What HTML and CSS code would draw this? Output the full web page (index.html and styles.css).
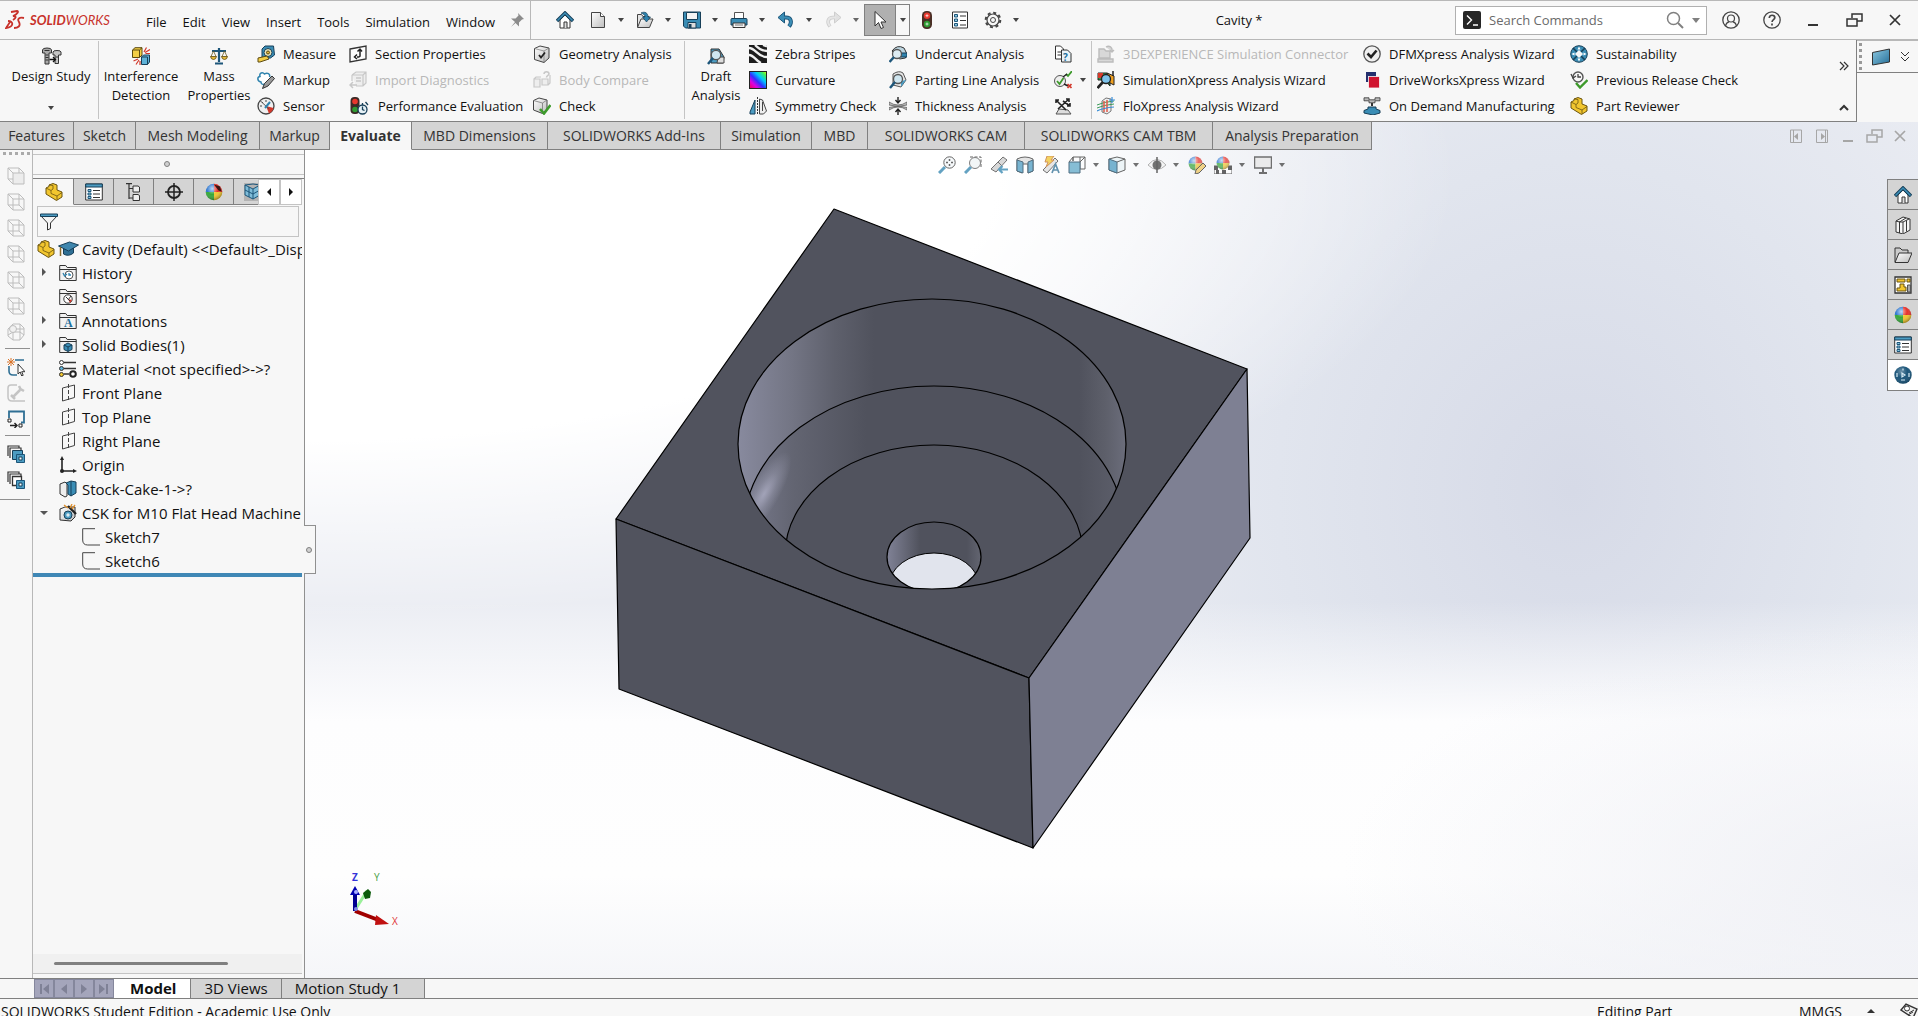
FILE: index.html
```html
<!DOCTYPE html>
<html lang="en">
<head>
  <meta charset="UTF-8">
  <title>SOLIDWORKS - Cavity</title>
  <meta name="viewport" content="width=device-width, initial-scale=1.0">
  <link rel="stylesheet" href="styles.css">
</head>
<body>

  <!-- ICON SPRITE -->
  <svg class="sprite" aria-hidden="true">
    <defs>
      <linearGradient id="blueFill" x1="0" y1="0" x2="1" y2="1"><stop offset="0" stop-color="#8cc8e0"/><stop offset="1" stop-color="#256f99"/></linearGradient>
      <linearGradient id="greyFill" x1="0" y1="0" x2="1" y2="1"><stop offset="0" stop-color="#ffffff"/><stop offset="1" stop-color="#bdbdbd"/></linearGradient>
      <linearGradient id="rainbow" x1="0" y1="1" x2="1" y2="0"><stop offset="0" stop-color="#f00050"/><stop offset=".25" stop-color="#e000e0"/><stop offset=".45" stop-color="#3030ff"/><stop offset=".65" stop-color="#00c8ff"/><stop offset=".85" stop-color="#40f060"/><stop offset="1" stop-color="#e0ff00"/></linearGradient>
      <radialGradient id="shine" cx=".4" cy=".3" r=".7"><stop offset="0" stop-color="#fff" stop-opacity=".7"/><stop offset=".5" stop-color="#fff" stop-opacity="0"/><stop offset="1" stop-color="#000" stop-opacity=".35"/></radialGradient>
    </defs>

    <symbol id="home" viewBox="0 0 18 18"><path d="M4 9v8h10V9L9 4z" fill="#fff" stroke="#333"/><path d="M8 17v-6h3v6" fill="#ddd" stroke="#333"/><path d="M1 10l8-8 8 8" fill="none" stroke="#173f58" stroke-width="3.4"/><path d="M1.500 9.500L9 2l7.500 7.500" fill="none" stroke="#3c8fb8" stroke-width="1.500"/></symbol>
    <symbol id="new" viewBox="0 0 18 18"><path d="M2.500 1.500h9l4 4v11h-13z" fill="url(#greyFill)" stroke="#444"/><path d="M11.500 1.500v4h4" fill="#fff" stroke="#444"/></symbol>
    <symbol id="open" viewBox="0 0 18 18"><path d="M1.500 16V3.500h4l1.500 2h6V8" fill="#e4e4e4" stroke="#444"/><path d="M1.500 16.500L5 8h12l-3.500 8.500z" fill="url(#greyFill)" stroke="#444"/><path d="M5 2c4-2 7 0 7 4h2.500L10.500 11 6.500 6H9c0-2-1-3-4-4z" fill="#2f83ae" stroke="#173f58" stroke-width=".7"/></symbol>
    <symbol id="save" viewBox="0 0 18 18"><path d="M.5 1h17v16H2.500L.5 15z" fill="#3a8db5" stroke="#173f58"/><path d="M3.500 1.500h11v7h-11z" fill="#f4f4f4" stroke="#173f58"/><path d="M5 11.500h8V17H5z" fill="#ddd" stroke="#173f58"/><path d="M6 13h2.500v4H6z" fill="#173f58"/></symbol>
    <symbol id="print" viewBox="0 0 18 18"><path d="M4.500 8V1.500h9V8" fill="#fff" stroke="#555"/><path d="M1 8.500q0-1 1-1h14q1 0 1 1V14H1z" fill="#3a8db5" stroke="#173f58"/><path d="M3 12h12v4.500H3z" fill="#f4f4f4" stroke="#333"/><path d="M5 14h8" stroke="#777"/></symbol>
    <symbol id="undo" viewBox="0 0 18 18"><path d="M6 6.500h3c5 0 6.500 4.500 3 9" fill="none" stroke="#1d567a" stroke-width="4"/><path d="M1 6.500L7.500 1v11z" fill="#3a8db5" stroke="#1d567a"/><path d="M6 6.500h3c5 0 6.500 4.500 3 8.500" fill="none" stroke="#3a8db5" stroke-width="2.200"/></symbol>
    <symbol id="redo" viewBox="0 0 18 18"><path d="M12 6.500H9c-5 0-6.500 4.500-3 9" fill="none" stroke="#c4c4c4" stroke-width="3.600"/><path d="M17 6.500L10.500 1v11z" fill="#dcdcdc" stroke="#c4c4c4"/><path d="M12 6.500H9c-5 0-6.500 4.500-3 8.500" fill="none" stroke="#e2e2e2" stroke-width="2"/></symbol>
    <symbol id="cursor" viewBox="0 0 18 18"><path d="M4 .5v14.500l3.500-3.500L10 17.500l2.500-1-2.500-5.500h5z" fill="#fff" stroke="#333"/></symbol>
    <symbol id="traffic" viewBox="0 0 18 18"><rect x="4" y="0" width="10" height="18" rx="4.500" fill="#4a2e26"/><circle cx="9" cy="4.700" r="3.200" fill="#e8372c"/><circle cx="9" cy="13" r="3.200" fill="#2e9a31"/><path d="M7.500 4.700h3M9 3.200v3M7.500 13h3M9 11.500v3" stroke="#fff" stroke-opacity=".7"/></symbol>
    <symbol id="list" viewBox="0 0 18 18"><path d="M1.500 1h15v16h-15z" fill="#fff" stroke="#333"/><path d="M3.500 3.500h3v2.500h-3zM3.500 8h3v2.500h-3zM3.500 12.500h3V15h-3z" fill="#8cc8e0" stroke="#1d567a"/><path d="M9 5h6M9 9.500h6M9 14h6" stroke="#333"/></symbol>
    <symbol id="gear" viewBox="0 0 18 18"><circle cx="9" cy="9" r="7.300" fill="none" stroke="#444" stroke-width="2" stroke-dasharray="3 2.730"/><circle cx="9" cy="9" r="6" fill="#f7f7f7" stroke="#444" stroke-width="1.200"/><circle cx="9" cy="9" r="2.500" fill="none" stroke="#444"/></symbol>
    <symbol id="pin" viewBox="0 0 18 18"><path d="M10 2l6 6-2 .5-3 3v4L7.500 12 3 16l4-5-4-3.500h4.500l3-3z" fill="#8c8c8c"/></symbol>
    <symbol id="prompt" viewBox="0 0 18 18"><rect width="18" height="18" rx="2" fill="#262626"/><path d="M4 4.500L8.500 9 4 13.500M10 14h5" fill="none" stroke="#fff" stroke-width="1.400"/></symbol>
    <symbol id="magnify" viewBox="0 0 18 18"><circle cx="7.500" cy="7.500" r="6" fill="none" stroke="#808080" stroke-width="1.500"/><path d="M12 12l5 5" stroke="#808080" stroke-width="2"/></symbol>
    <symbol id="user" viewBox="0 0 18 18"><circle cx="9" cy="9" r="8.200" fill="none" stroke="#444" stroke-width="1.300"/><circle cx="9" cy="7.500" r="3.500" fill="none" stroke="#444" stroke-width="1.200"/><path d="M3.500 15c.5-3 2.500-4 3.500-4.200M14.500 15c-.5-3-2.500-4-3.500-4.200" fill="none" stroke="#444" stroke-width="1.200"/></symbol>
    <symbol id="help" viewBox="0 0 18 18"><circle cx="9" cy="9" r="8.200" fill="none" stroke="#444" stroke-width="1.300"/><path d="M6.300 7c0-3.800 5.500-3.500 5.500-.3 0 2-2.700 2-2.700 4.300M9 12.500v2" fill="none" stroke="#444" stroke-width="1.700"/></symbol>
    <symbol id="minimize" viewBox="0 0 18 18"><path d="M4 14h10" stroke="currentColor" stroke-width="2"/></symbol>
    <symbol id="restore" viewBox="0 0 18 18"><path d="M7 7V3h10v7h-5M2 8h10v7H2z" fill="none" stroke="currentColor" stroke-width="1.500"/></symbol>
    <symbol id="close" viewBox="0 0 18 18"><path d="M4 4l10 10M14 4L4 14" stroke="currentColor" stroke-width="1.700"/></symbol>
    <symbol id="dock-left" viewBox="0 0 18 18"><path d="M3.500 3h11v12.500h-11zM6.500 3v12.500" fill="none" stroke="currentColor"/><path d="M11 6v7L7 9.500z" fill="currentColor"/></symbol>
    <symbol id="dock-right" viewBox="0 0 18 18"><path d="M3.500 3h11v12.500h-11zM12.500 3v12.500" fill="none" stroke="currentColor"/><path d="M8 6v7l4-3.500z" fill="currentColor"/></symbol>

    <symbol id="bolts" viewBox="0 0 20 18"><path d="M1 3q0-2 4.500-2T10 3v3H7.500v11h-4V6H1z" fill="#a9a9a9" stroke="#333"/><path d="M11.500 5q0-1.500 4-1.500t4 1.500v3H17v8.500h-3.500V8h-2z" fill="#c4c4c4" stroke="#333"/><path d="M3 3.500h5M4 8h3M4 10.500h3M4 13h3M14 10h3" stroke="#333"/><path d="M8 12.500h6M11.500 10l2.500 2.500-2.500 2.500" fill="none" stroke="#111" stroke-width="1.300"/></symbol>
    <symbol id="interference" viewBox="0 0 18 18"><path d="M.5 3L3 .7h7V8L7.500 10.500h-7z" fill="#f3ce45" stroke="#5c4a10"/><path d="M.5 3h7v7.500M7.500 3L10 .7" fill="none" stroke="#5c4a10"/><path d="M9.500 10L11.500 8h6v7l-2 2.500h-6z" fill="#5fb2d8" stroke="#173f58"/><path d="M9.500 10h6v7.500" fill="none" stroke="#173f58"/><path d="M12 5l2.500-4.500M13 5.500l5-3M13.500 6.500H18M6 12l-4.500 2M7 13l-3 4.500M8 14v4" stroke="#d2382b" stroke-width="1.200"/></symbol>
    <symbol id="scales" viewBox="0 0 18 18"><path d="M9 1v14M2 4h14M5 16.500h8" stroke="#1d567a" stroke-width="2.200"/><path d="M3.500 4L1 9.500M3.500 4L6 9.500M14.500 4L12 9.500M14.500 4L17 9.500" stroke="#6b5b20" stroke-width=".8"/><path d="M.5 9.500h6q-.5 3-3 3t-3-3zM11.500 9.500h6q-.5 3-3 3t-3-3z" fill="#e3b83a" stroke="#5c4a10" stroke-width=".8"/></symbol>
    <symbol id="measure" viewBox="0 0 18 18"><path d="M5 4l3-3h8.500l1 9-4 3H5z" fill="#3a8db5" stroke="#173f58"/><circle cx="11" cy="7.500" r="4" fill="#e8e2b8" stroke="#173f58"/><circle cx="11" cy="7.500" r="1.500" fill="#e3b83a" stroke="#5c4a10"/><path d="M1 13l9-2 2 3-9 3H1z" fill="#f3ce45" stroke="#5c4a10"/></symbol>
    <symbol id="markup" viewBox="0 0 18 18"><path d="M9 12c-2 2-5 2-5-1-4-1-4-5-1-5.500C2 2 5.500.5 7.500 3c3-2 6 0 5 3" fill="#fff" stroke="#2f83ae" stroke-width="1.500"/><path d="M5.500 17.500l2-5L15 5l2.500 2.500L11 15z" fill="#9a9a9a" stroke="#333"/></symbol>
    <symbol id="sensor" viewBox="0 0 18 18"><circle cx="9" cy="9" r="8" fill="#f0f0f0" stroke="#444" stroke-width="1.300"/><path d="M9 9l7.500 2A8 8 0 0 1 12 16.500z" fill="#d2382b"/><path d="M3 9h2M5 5l1 1M9 3v2M13 5l-1 1" stroke="#444"/><path d="M3 3.500L12 12" stroke="#555"/><path d="M8 11l5-6" stroke="#2f83ae" stroke-width="2"/></symbol>
    <symbol id="section" viewBox="0 0 18 18"><path d="M1 4l16-3v13L1 17z" fill="#fdfdfd" stroke="#333" stroke-width="1.300"/><path d="M11 5v6q0 1-3 1M8.500 6.500L11 4l2 2.500M8 9.500L5.500 12 8 14" fill="none" stroke="#222" stroke-width="1.500"/></symbol>
    <symbol id="diagnostics" viewBox="0 0 18 18"><path d="M3 4l4-3h10v11l-3 3H7M3 4h11v11M14 4l3-3M3 4v6" fill="#eee" stroke="#c8c8c8" stroke-width="1.200"/><path d="M7 7h5M7 10h5M1 14h7M4 11l-3 3 3 3" fill="none" stroke="#c8c8c8" stroke-width="1.500"/></symbol>
    <symbol id="performance" viewBox="0 0 18 18"><rect x="0" y="0" width="9" height="17" rx="4" fill="#3b2a26"/><circle cx="4.500" cy="4.500" r="2.800" fill="#e8372c"/><circle cx="4.500" cy="12.500" r="2.800" fill="#2e9a31"/><circle cx="12" cy="12.500" r="4.500" fill="#e6f1f6" stroke="#173f58" stroke-width="1.300"/><path d="M12 9.500v3l2 1M12 6V8M15 5l2.500 3" fill="none" stroke="#173f58" stroke-width="1.300"/></symbol>
    <symbol id="geometry" viewBox="0 0 18 18"><path d="M1.500 3.500L7 1l9 2v10l-5 4.500-9.500-3z" fill="url(#greyFill)" stroke="#444"/><path d="M1.500 3.500L11 6v11.500M11 6l5-3" fill="none" stroke="#777" stroke-width=".7"/><path d="M6 10l2 2.500 4-5" fill="none" stroke="#222" stroke-width="1.800"/></symbol>
    <symbol id="compare" viewBox="0 0 18 18"><path d="M1 8h6v8H1zM1 8l2-2h5M9 8h6v6H9zM15 14l2-2V4" fill="#eee" stroke="#c8c8c8" stroke-width="1.200"/><path d="M11 3c0-3 5-3 5 0 0 1.500-2.500 1.500-2.500 3.500" fill="none" stroke="#c8c8c8" stroke-width="1.500"/></symbol>
    <symbol id="check" viewBox="0 0 18 18"><path d="M.5 3.500L6 1l8 2v9l-4.500 4.500L.5 13z" fill="url(#greyFill)" stroke="#444"/><path d="M.5 3.500L9.500 6l4.500-3M9.500 6v10" fill="none" stroke="#777" stroke-width=".8"/><path d="M7 12l4 4.500L17.500 8" fill="none" stroke="#3d9a2b" stroke-width="2.600"/></symbol>
    <symbol id="draft" viewBox="0 0 18 18"><path d="M4 2h8l5 8-1 6H4z" fill="#4c9cc2" stroke="#333"/><path d="M11 10h6v6h-7z" fill="#ddd" stroke="#444"/><circle cx="9" cy="8" r="4.700" fill="#cfe6f0" stroke="#555" stroke-width="1.300"/><path d="M6 11l-5 6" stroke="#1d567a" stroke-width="2.500"/></symbol>
    <symbol id="zebra" viewBox="0 0 18 18"><rect width="18" height="18" fill="#1c1c1c"/><path d="M0 3c7 0 8 9 18 9M0 10c5 0 7 6 12 8M6 0c3 3 6 6 12 6M14 0l4 1.500" fill="none" stroke="#f0f0f0" stroke-width="2.300"/></symbol>
    <symbol id="curvature" viewBox="0 0 18 18"><rect x=".5" y=".5" width="17" height="17" fill="url(#rainbow)" stroke="#222"/></symbol>
    <symbol id="symmetry" viewBox="0 0 18 18"><path d="M1 15L6 3v14H1z" fill="#4c9cc2" stroke="#173f58"/><path d="M8.500 0v18" stroke="#333" stroke-dasharray="2 1"/><path d="M10.500 2l3 1 4 11-3 3h-4zM13.500 5v9" fill="#eee" stroke="#444"/></symbol>
    <symbol id="undercut" viewBox="0 0 18 18"><path d="M3 6q5-7 12-3l2.500 5-1 5-6 1z" fill="#bcd4df" stroke="#333"/><path d="M11 8h7v4h-6z" fill="#2f83ae" stroke="#173f58"/><circle cx="8" cy="9" r="4.500" fill="#dcebf2" stroke="#555" stroke-width="1.300"/><path d="M5 12l-4.500 5" stroke="#1d567a" stroke-width="2.500"/></symbol>
    <symbol id="parting" viewBox="0 0 18 18"><path d="M4 3q6-4 10-1l3 7-5 7-8-2z" fill="#e6e6e6" stroke="#555"/><path d="M12 10l5-1-5 7z" fill="#4c9cc2"/><circle cx="9" cy="8" r="4.500" fill="#cfe6f0" stroke="#555" stroke-width="1.300"/><path d="M6 11l-5 6" stroke="#1d567a" stroke-width="2.500"/></symbol>
    <symbol id="thickness" viewBox="0 0 18 18"><path d="M0 5q9 6 18 0v3q-9 3-18 0zM0 13q9-6 18 0v-2.500q-9-3-18 0z" fill="#bbb" stroke="#555" stroke-width=".7"/><path d="M9 0v5M6.500 3L9 6l2.500-3M9 18v-5M6.500 15L9 12l2.500 3" fill="none" stroke="#222" stroke-width="1.400"/></symbol>
    <symbol id="dimxpert" viewBox="0 0 18 18"><circle cx="6" cy="10" r="5.500" fill="#eee" stroke="#555"/><path d="M3 10l2.500 3 4-6M12 3l2 2 4-5" fill="none" stroke="#3d9a2b" stroke-width="1.800"/><path d="M9 6l4-3M10 13l4 2" stroke="#222" stroke-width="1.500"/><path d="M13.500 13l4 4M17.500 13l-4 4" stroke="#d2382b" stroke-width="1.700"/></symbol>
    <symbol id="network" viewBox="0 0 18 18"><path d="M2 17l3-5 9 1 3 4z" fill="#ddd" stroke="#555"/><path d="M2 3l10 10M15 2L4 12M2 6V3h3M12 2h3v3M9 4l7 5M16 6v3h-3" fill="none" stroke="#222" stroke-width="1.600"/></symbol>
    <symbol id="connector" viewBox="0 0 18 18"><path d="M2 4h5l2 2h4v7H2zM1 14h15v3H1zM9 2c3-2 7 0 6 5M13 5l2 2 2-2" fill="#d8d8d8" stroke="#bcbcbc" stroke-width="1.400"/></symbol>
    <symbol id="simxpress" viewBox="0 0 18 18"><path d="M1 2h9l3 3v10L8 9H1z" fill="#2b9b48" stroke="#222"/><path d="M10 2l7 3v9l-4-2z" fill="#f0a020" stroke="#222"/><path d="M1 2h5v5H1z" fill="#d83a2b"/><circle cx="9" cy="8" r="4.500" fill="#7cc2ea" stroke="#222" stroke-width="1.300"/><path d="M6 11l-5.500 6" stroke="#222" stroke-width="2.600"/><path d="M16 0v5" stroke="#222" stroke-width="1.500"/></symbol>
    <symbol id="floxpress" viewBox="0 0 18 18"><path d="M5 4l4-3 5 1v12l-4 3-5-2z" fill="#eee" stroke="#777"/><path d="M0 8q6-3 17-4M0 11q6-3 17-4" fill="none" stroke="#3d9a5b"/><path d="M7 4v11M10 3v12" stroke="#e05a4a" stroke-width="1.500"/><path d="M0 14q6-3 17-4M12 3h6M15 0v6" fill="none" stroke="#3a8dd5" stroke-width="1.200"/></symbol>
    <symbol id="dfm" viewBox="0 0 18 18"><circle cx="9" cy="9" r="8.200" fill="#f0f0f0" stroke="#555" stroke-width="1.300"/><path d="M4.500 8.500L8 12l5.500-6.500" fill="none" stroke="#222" stroke-width="2.600"/></symbol>
    <symbol id="driveworks" viewBox="0 0 18 18"><rect x="3" y="1" width="10" height="10" fill="#24306e"/><rect x="5.500" y="5.500" width="11" height="11.500" fill="#d0142f" stroke="#f7f7f7" stroke-width=".8"/></symbol>
    <symbol id="ondemand" viewBox="0 0 18 18"><path d="M1 .8h5v2h6v-2h5v3h-5v2H6v-2H1z" fill="#bbb" stroke="#333" stroke-width=".8"/><path d="M8 6h2v3H8z" fill="#333"/><path d="M5 10h8v2l4 1.500V16l-7 2-9-2v-2.500L5 12z" fill="#3a8db5" stroke="#173f58"/></symbol>
    <symbol id="sustain" viewBox="0 0 18 18"><circle cx="9" cy="9" r="8.300" fill="#3a8db5" stroke="#173f58"/><path d="M3 3l4 4M15 3l-4 4M3 15l4-4M15 15l-4-4" stroke="#173f58" stroke-width="1.600"/><path d="M9 5l4 4-4 4-4-4z" fill="#f7f7f7"/><path d="M9 1.500l1.500 3h-3zM9 16.500l1.500-3h-3zM1.500 9l3-1.500v3zM16.500 9l-3-1.500v3z" fill="#fff"/></symbol>
    <symbol id="release" viewBox="0 0 18 18"><circle cx="8" cy="6" r="5" fill="#f7f7f7" stroke="#555" stroke-width="1.400"/><path d="M8 3v3h3M1 3l2 4 3-2" fill="none" stroke="#444" stroke-width="1.300"/><path d="M6 12l4 4.500L17.500 9" fill="none" stroke="#3d9a2b" stroke-width="2.400"/></symbol>
    <symbol id="part" viewBox="0 0 18 18"><path d="M1 5l3-1.500V2l4-1.500 4 1.500v5l5 2v5l-5.500 3.500L1 11z" fill="#f2c62e" stroke="#6b5410"/><path d="M1 5l5 2.500v3l6 2.500v4M6 7.500L8 6l0-3.500M12 13l5-3.500M8 2.500L4 2" fill="none" stroke="#6b5410" stroke-width=".8"/></symbol>
    <symbol id="plane-blue" viewBox="0 0 18 18"><path d="M.5 4.500l17-3.500v13L.5 17z" fill="url(#blueFill)" stroke="#333"/></symbol>

    <symbol id="cube" viewBox="0 0 18 18"><path d="M1 1h11v11H1zM6 6h11v11H6zM1 1l5 5M12 1l5 5M1 12l5 5M12 12l5 5" fill="none" stroke="#bdbdbd"/></symbol>
    <symbol id="cube-front" viewBox="0 0 18 18"><path d="M1 1h11v11H1zM1 1l5 5M12 1l5 5M1 12l5 5" fill="none" stroke="#bdbdbd"/><path d="M6 6h11v11H6z" fill="#ececec" stroke="#bdbdbd"/></symbol>
    <symbol id="cube-iso" viewBox="0 0 18 18"><path d="M6 1h7l4 4v7l-4 5H6l-5-4V6zM6 6h11M6 6v11M1 12l5-3h7l4 3M13 1v16" fill="none" stroke="#bdbdbd"/><circle cx="6" cy="6" r="3.500" fill="#f0f0f0" stroke="#bdbdbd"/></symbol>
    <symbol id="sketch-edit" viewBox="0 0 18 18"><path d="M8 2h9M2 8v5q0 4 4 4h4" fill="none" stroke="#2f6f94" stroke-width="1.600"/><path d="M4 0v8M0 4h8M1 1l6 6M7 1L1 7" stroke="#d8742b"/><path d="M11 6v10l2.200-2 1.500 4 1.500-.7-1.500-3.600H18z" fill="#fff" stroke="#333"/></symbol>
    <symbol id="wrench" viewBox="0 0 18 18"><path d="M10 1H4Q1 1 1 4v9q0 4 4 4h13" fill="none" stroke="#c4c4c4" stroke-width="1.500"/><path d="M6 13l7-7M12 2l1.500 3L17 7M4 11l4 4" fill="none" stroke="#c4c4c4" stroke-width="2.500"/></symbol>
    <symbol id="drawing" viewBox="0 0 18 18"><path d="M2 8V1.500h15v11h-3" fill="none" stroke="#2f6f94" stroke-width="1.800"/><path d="M1 9h3v3H1zM12 14h3v3h-3z" fill="#fff" stroke="#222"/><path d="M3 15.500h7M7.500 13l2.500 2.500L7.500 18" fill="none" stroke="#222" stroke-width="1.400"/></symbol>
    <symbol id="stack" viewBox="0 0 18 18"><path d="M1 11V1h11v2M3 13V3h11v2" fill="none" stroke="#333" stroke-width="1.200"/><path d="M5.500 5.500h10v9h-10z" fill="#4c9cc2" stroke="#173f58"/><path d="M9.500 9.500h8v8h-8z" fill="#4c9cc2" stroke="#1d567a"/><path d="M12 12h3v3h-3z" fill="#fff" stroke="#173f58"/></symbol>
    <symbol id="stack-open" viewBox="0 0 18 18"><path d="M1 11V1h11v2M3 13V3h11v2" fill="none" stroke="#333" stroke-width="1.200"/><path d="M5.500 5.500h9v9h-9z" fill="#fff" stroke="#333" stroke-width="1.300"/><path d="M9.500 9.500h8v8h-8z" fill="#4c9cc2" stroke="#1d567a"/><path d="M12 12h3v3h-3z" fill="#fff" stroke="#173f58"/></symbol>

    <symbol id="property" viewBox="0 0 18 18"><path d="M.7 1h16.600v16H.7z" fill="#fff" stroke="#333"/><path d="M.7 1h16.600v3H.7z" fill="#4c9cc2" stroke="#173f58"/><path d="M3 6.500h3v2H3zM3 10h3v2H3zM3 13.500h3v2H3z" fill="#8cc8e0" stroke="#1d567a"/><path d="M8 7.500h7M8 11h7M8 14.500h7" stroke="#333"/></symbol>
    <symbol id="config" viewBox="0 0 18 18"><path d="M4 0v16M1 .7h6M4 5.500h4M4 15h4" fill="none" stroke="#333" stroke-width="1.200"/><path d="M8 3h5l1.500 1v5H8zM8 11.500h5l1.500 1v5H8z" fill="#eee" stroke="#333"/></symbol>
    <symbol id="target" viewBox="0 0 18 18"><circle cx="9" cy="9" r="6" fill="none" stroke="#222" stroke-width="1.800"/><path d="M9 0v18M0 9h18" stroke="#222" stroke-width="1.500"/></symbol>
    <symbol id="ball" viewBox="0 0 18 18"><path d="M9 .7A8.300 8.300 0 0 0 .7 9H9z" fill="#2f78d0"/><path d="M9 .7A8.300 8.300 0 0 1 17.300 9H9z" fill="#e5322b"/><path d="M.7 9A8.300 8.300 0 0 0 9 17.300V9z" fill="#36a83a"/><path d="M9 17.300A8.300 8.300 0 0 0 17.300 9H9z" fill="#f2c62e"/><circle cx="9" cy="9" r="8.300" fill="url(#shine)"/></symbol>
    <symbol id="ball-cut" viewBox="0 0 18 18"><use href="#ball"/><path d="M9 1.500l6 2 1.500 5-3-1z" fill="#3a1512"/></symbol>
    <symbol id="cam" viewBox="0 0 18 18"><path d="M0 0h18v18H0z" fill="#b3b3b3"/><path d="M1 2l8 4v10L1 12zM9 6l7-4v10l-7 4" fill="#7fbcd8" stroke="#1d567a"/><path d="M1 2l8-1 7 1M1 7l8 4 7-4M5 4v10" fill="none" stroke="#1d567a"/></symbol>
    <symbol id="funnel" viewBox="0 0 18 18"><path d="M1 3l6.500 7v7l3-1.500V10L17 3z" fill="#f4f4f4" stroke="#333"/><path d="M.5 1h17v2.500H.5z" fill="#4c9cc2" stroke="#173f58"/></symbol>
    <symbol id="cap" viewBox="0 0 20 18"><path d="M5 9v5q5 3 10-1V8z" fill="#2f6f94" stroke="#173f58"/><path d="M0 6l11-4 9 3-10 6z" fill="#3f86ad" stroke="#173f58"/><path d="M2 7v9" stroke="#8a6a2a" stroke-width="1.500"/></symbol>
    <symbol id="folder" viewBox="0 0 18 18"><path d="M.7 16.500V1.500h6l1.500 2h9v13z" fill="#f2f2f2" stroke="#333"/><path d="M.7 5.500h16.600" stroke="#333"/></symbol>
    <symbol id="history" viewBox="0 0 18 18"><use href="#folder"/><circle cx="10" cy="11" r="4" fill="#fff" stroke="#555"/><path d="M10 9v2h2M4 9l1.500 3L8 10" fill="none" stroke="#2f83ae" stroke-width="1.300"/></symbol>
    <symbol id="sensors" viewBox="0 0 18 18"><use href="#folder"/><circle cx="9" cy="11" r="4.200" fill="#fff" stroke="#333"/><path d="M9 11l4 1-2 3z" fill="#d2382b"/><path d="M7 9l4 4M9 12l3-4" stroke="#333"/></symbol>
    <symbol id="bodies" viewBox="0 0 18 18"><use href="#folder"/><path d="M5 9l4-2 4 2v4.500l-4 2-4-2z" fill="#3a8db5" stroke="#173f58"/><path d="M5 9l4 2 4-2M9 11v4.500" fill="none" stroke="#173f58"/></symbol>
    <symbol id="material" viewBox="0 0 18 18"><path d="M5 2.500h12M5 8.500h12M5 14h5" stroke="#333" stroke-width="1.500"/><circle cx="2.500" cy="2.500" r="2" fill="#fff" stroke="#333"/><circle cx="2.500" cy="8.500" r="2" fill="#5fb2d8" stroke="#333"/><circle cx="2.500" cy="14.500" r="2" fill="#f2c62e" stroke="#333"/><circle cx="14" cy="14" r="2.800" fill="#fff" stroke="#222" stroke-width="2"/></symbol>
    <symbol id="plane" viewBox="0 0 18 18"><path d="M3.500 4L15.500 1v12.500L3.500 17z" fill="none" stroke="#444"/><path d="M9.500 0v18" stroke="#444" stroke-dasharray="4 2"/></symbol>
    <symbol id="origin" viewBox="0 0 18 18"><path d="M3 2v13h13" fill="none" stroke="#222" stroke-width="1.600"/><path d="M1 4l2-4 2 4zM14 13l4 2-4 2z" fill="#222"/><circle cx="3" cy="15" r="2" fill="#222"/></symbol>
    <symbol id="stock" viewBox="0 0 18 18"><path d="M1 4l5-2 2 2v12l-2 1-5-3z" fill="#eee" stroke="#333"/><path d="M7 3l5-2 5 1v11l-5 3-3-2V5z" fill="#3a8db5" stroke="#173f58"/><path d="M12 1v15" stroke="#173f58"/></symbol>
    <symbol id="hole" viewBox="0 0 18 18"><path d="M1 5l5-2h10v10l-4 4-11-1z" fill="url(#greyFill)" stroke="#333"/><circle cx="9" cy="11" r="4" fill="#4c9cc2" stroke="#173f58"/><circle cx="9" cy="11" r="1.700" fill="#dcebf2"/><path d="M9 2l8 8" stroke="#222" stroke-width="2.300"/><path d="M5 1l4 3M13 0l-2 4M16 1l-3 4" stroke="#e0902b" stroke-width="1.300"/></symbol>
    <symbol id="sketch" viewBox="0 0 18 18"><path d="M13 .7H.7V12q0 5 5 5H18" fill="none" stroke="#444"/></symbol>

    <symbol id="zoom-fit" viewBox="0 0 18 18"><circle cx="11.500" cy="6.500" r="5.700" fill="#f4f8fa" stroke="#333"/><path d="M11.500 3v7M8 6.500h7" stroke="#333" stroke-width="1.500" stroke-dasharray="2 3"/><path d="M7 11l-6 6" stroke="#2f83ae" stroke-width="3"/></symbol>
    <symbol id="zoom-area" viewBox="0 0 18 18"><path d="M6 1h11v11" fill="none" stroke="#333" stroke-dasharray="3 1.500"/><circle cx="11" cy="7" r="5.500" fill="#eef3f5" stroke="#555"/><path d="M7 11l-6 6" stroke="#2f83ae" stroke-width="3"/></symbol>
    <symbol id="prev-view" viewBox="0 0 18 18"><path d="M1 13L13 1l4 3L6 16z" fill="#ccc" stroke="#444"/><path d="M8 6l4 4" stroke="#444"/><path d="M9 13.500h9M12.500 10L9 13.500l3.500 3.500" fill="none" stroke="#2f83ae" stroke-width="2.200"/></symbol>
    <symbol id="section-view" viewBox="0 0 18 18"><path d="M1 3q8-4 16 0v12l-5 2V8H6v9l-5-2z" fill="#ddd" stroke="#333"/><path d="M1 4l6 2v11l-6-2zM17 4l-5 2v11l5-2z" fill="#4c9cc2" stroke="#173f58"/></symbol>
    <symbol id="dynamic" viewBox="0 0 18 18"><path d="M1 14L13 2l3 3L5 17z" fill="#ddd" stroke="#444"/><path d="M5 0h7l-3 4h3L4 11l2-5H3z" fill="#f2c62e" stroke="#c0702b"/><path d="M10 17l3.500-9L17 17M11 14h5" fill="none" stroke="#2f6f94" stroke-width="1.700"/></symbol>
    <symbol id="orient" viewBox="0 0 18 18"><path d="M5 5V1h12v12h-5M5 1v4M12 6l5-5M1 6l4-5M12 1v12" fill="none" stroke="#333"/><path d="M1 6h11v11H1z" fill="#5fa8c8" stroke="#173f58"/></symbol>
    <symbol id="display" viewBox="0 0 18 18"><path d="M1 3l8-2 8 2v11l-8 3-8-3z" fill="#e8f2f6" stroke="#333"/><path d="M1 3l8 3v11l-8-3z" fill="#4c9cc2" stroke="#173f58"/><path d="M9 6l8-3" stroke="#333"/></symbol>
    <symbol id="eye" viewBox="0 0 18 18"><path d="M0 9q9-11 18 0-9 9-18 0z" fill="#f4f4f4" stroke="#999"/><circle cx="9" cy="9" r="4.500" fill="#444"/><path d="M9 1v16" stroke="#333" stroke-width="1.500"/></symbol>
    <symbol id="appearance" viewBox="0 0 18 18"><use href="#ball" width="15" height="15"/><path d="M7 18l1-4 7-7 3 3-7 7z" fill="#f0c860" stroke="#333"/></symbol>
    <symbol id="scene" viewBox="0 0 18 18"><path d="M0 10h18v8H0z" fill="#fff" stroke="#333"/><path d="M0 10h4v4H0zM8 14h4v4H8zM14 10h4v4h-4zM2 14h3v4H2z" fill="#333"/><use href="#ball" x="2" width="14" height="14"/></symbol>
    <symbol id="monitor" viewBox="0 0 18 18"><path d="M.5 1h17v11H.5z" fill="#e8e8e8" stroke="#444" stroke-width="1.500"/><path d="M9 12v4M5 17h8" stroke="#444" stroke-width="2"/></symbol>

    <symbol id="books" viewBox="0 0 18 18"><path d="M2 5l7-4 7 2v11l-7 4-7-2z" fill="#f4f4f4" stroke="#333"/><path d="M5.500 5.500v11.500M9 6v11.500M12.500 4.500v11M2 5l3.500 1L12 2M5.500 6L9 6l6-3" fill="none" stroke="#333"/></symbol>
    <symbol id="explorer" viewBox="0 0 18 18"><path d="M1 16V2h5l2 2h6v3" fill="#ccc" stroke="#333"/><path d="M1 16.500L5 7h13l-4 9.500z" fill="url(#greyFill)" stroke="#333"/></symbol>
    <symbol id="palette" viewBox="0 0 18 18"><path d="M1 1h16v16H1z" fill="#fff" stroke="#333" stroke-width="1.300"/><path d="M3 3h8v3H3zM13 3h3v3h-3zM6 8h4v3h2v4H3v-3h3z" fill="#f2c62e" stroke="#6b5410"/><path d="M13.500 9h3v7h-3z" fill="#aaa" stroke="#555"/></symbol>
    <symbol id="globe" viewBox="0 0 18 18"><circle cx="9" cy="9" r="8.700" fill="#1d567a"/><circle cx="9" cy="9" r="8.700" fill="url(#shine)" opacity=".5"/><path d="M3 7v4M15 7v4M8 7v4l3-2zM7 14h4M9 2.500v2" fill="none" stroke="#d8ecf5" stroke-width="1.200"/></symbol>
    <symbol id="tag" viewBox="0 0 18 18"><path d="M1 8l5-6 11 5-4 9z" fill="#eee" stroke="#333" stroke-width="1.400"/><circle cx="7" cy="6.500" r="2.500" fill="#fff" stroke="#333"/><path d="M9 11l5-3M8 13l5-3" stroke="#333"/></symbol>
  </svg>

  <div class="app">

    <!-- TITLE BAR -->
    <header class="titlebar">
      <div class="brand">
        <svg class="brand-mark" viewBox="0 0 20 20" aria-hidden="true"><path d="M6 2l6-1c2 0 1 3-4 5 4 0 3 2 0 4M3 11c6 0 6 6-2 7L5 12M19 8c-5-1-7 1-5 4 2 4-1 6-5 6" fill="none" stroke="#c8322b" stroke-width="1.800"/></svg>
        <span class="brand-name"><b>SOLID</b>WORKS</span>
      </div>
      <nav class="menu">
        <a href="#">File</a>
        <a href="#">Edit</a>
        <a href="#">View</a>
        <a href="#">Insert</a>
        <a href="#">Tools</a>
        <a href="#">Simulation</a>
        <a href="#">Window</a>
      </nav>
      <button class="pin" aria-label="Pin menu"><svg class="icon"><use href="#pin"/></svg></button>
      <div class="quickbar">
        <button aria-label="Home"><svg class="icon"><use href="#home"/></svg></button>
        <button class="split" aria-label="New"><svg class="icon"><use href="#new"/></svg><i class="caret"></i></button>
        <button class="split" aria-label="Open"><svg class="icon"><use href="#open"/></svg><i class="caret"></i></button>
        <button class="split" aria-label="Save"><svg class="icon"><use href="#save"/></svg><i class="caret"></i></button>
        <button class="split" aria-label="Print"><svg class="icon"><use href="#print"/></svg><i class="caret"></i></button>
        <button class="split" aria-label="Undo"><svg class="icon"><use href="#undo"/></svg><i class="caret"></i></button>
        <button class="split last" aria-label="Redo" disabled><svg class="icon"><use href="#redo"/></svg><i class="caret"></i></button>
        <button class="select-tool" aria-label="Select"><svg class="icon"><use href="#cursor"/></svg></button>
        <button class="select-more" aria-label="Select options"><i class="caret"></i></button>
        <button aria-label="Rebuild"><svg class="icon"><use href="#traffic"/></svg></button>
        <button aria-label="File properties"><svg class="icon"><use href="#list"/></svg></button>
        <button class="split" aria-label="Options"><svg class="icon"><use href="#gear"/></svg><i class="caret"></i></button>
      </div>
      <div class="doc-title">Cavity *</div>
      <label class="search">
        <svg class="icon"><use href="#prompt"/></svg>
        <input type="text" placeholder="Search Commands" aria-label="Search Commands">
        <svg class="icon"><use href="#magnify"/></svg>
        <i class="caret"></i>
      </label>
      <div class="window-controls">
        <button aria-label="Account"><svg class="icon"><use href="#user"/></svg></button>
        <button aria-label="Help"><svg class="icon"><use href="#help"/></svg></button>
        <button aria-label="Minimize"><svg class="icon"><use href="#minimize"/></svg></button>
        <button aria-label="Restore"><svg class="icon"><use href="#restore"/></svg></button>
        <button aria-label="Close"><svg class="icon"><use href="#close"/></svg></button>
      </div>
    </header>

    <!-- RIBBON -->
    <div class="ribbon-row">
      <div class="ribbon">
        <div class="group">
          <button class="big study"><svg class="icon wide"><use href="#bolts"/></svg><span>Design Study</span><i class="caret"></i></button>
        </div>
        <div class="group">
          <button class="big interference"><svg class="icon"><use href="#interference"/></svg><span>Interference Detection</span></button>
          <button class="big mass"><svg class="icon"><use href="#scales"/></svg><span>Mass Properties</span></button>
          <div class="cmds c1">
            <button><svg class="icon"><use href="#measure"/></svg>Measure</button>
            <button><svg class="icon"><use href="#markup"/></svg>Markup</button>
            <button><svg class="icon"><use href="#sensor"/></svg>Sensor</button>
          </div>
          <div class="cmds c2">
            <button><svg class="icon"><use href="#section"/></svg>Section Properties</button>
            <button disabled><svg class="icon"><use href="#diagnostics"/></svg>Import Diagnostics</button>
            <button><svg class="icon wide"><use href="#performance"/></svg>Performance Evaluation</button>
          </div>
          <div class="cmds c3">
            <button><svg class="icon"><use href="#geometry"/></svg>Geometry Analysis</button>
            <button disabled><svg class="icon"><use href="#compare"/></svg>Body Compare</button>
            <button><svg class="icon"><use href="#check"/></svg>Check</button>
          </div>
        </div>
        <div class="group">
          <button class="big draft"><svg class="icon"><use href="#draft"/></svg><span>Draft Analysis</span></button>
          <div class="cmds c4">
            <button><svg class="icon"><use href="#zebra"/></svg>Zebra Stripes</button>
            <button><svg class="icon"><use href="#curvature"/></svg>Curvature</button>
            <button><svg class="icon"><use href="#symmetry"/></svg>Symmetry Check</button>
          </div>
          <div class="cmds c5">
            <button><svg class="icon"><use href="#undercut"/></svg>Undercut Analysis</button>
            <button><svg class="icon"><use href="#parting"/></svg>Parting Line Analysis</button>
            <button><svg class="icon"><use href="#thickness"/></svg>Thickness Analysis</button>
          </div>
          <div class="cmds c6">
            <button aria-label="Compare Documents"><svg class="icon" viewBox="0 0 18 18"><path d="M1.500 1h5l3 3v10h-8z" fill="#fff" stroke="#333"/><path d="M3.500 7h4M3.500 10h4" stroke="#333"/><path d="M7.500 5h6l3.500 3.500V17H7.500z" fill="#eaf3f8" stroke="#333"/><text class="icon-mark" x="9" y="16">?</text></svg></button>
            <button aria-label="Costing"><svg class="icon"><use href="#dimxpert"/></svg><i class="caret"></i></button>
            <button aria-label="Mesh"><svg class="icon"><use href="#network"/></svg></button>
          </div>
        </div>
        <div class="group">
          <div class="cmds c7">
            <button disabled><svg class="icon"><use href="#connector"/></svg>3DEXPERIENCE Simulation Connector</button>
            <button><svg class="icon"><use href="#simxpress"/></svg>SimulationXpress Analysis Wizard</button>
            <button><svg class="icon"><use href="#floxpress"/></svg>FloXpress Analysis Wizard</button>
          </div>
          <div class="cmds c8">
            <button><svg class="icon"><use href="#dfm"/></svg>DFMXpress Analysis Wizard</button>
            <button><svg class="icon"><use href="#driveworks"/></svg>DriveWorksXpress Wizard</button>
            <button><svg class="icon"><use href="#ondemand"/></svg>On Demand Manufacturing</button>
          </div>
          <div class="cmds">
            <button><svg class="icon"><use href="#sustain"/></svg>Sustainability</button>
            <button><svg class="icon"><use href="#release"/></svg>Previous Release Check</button>
            <button><svg class="icon"><use href="#part"/></svg>Part Reviewer</button>
          </div>
        </div>
        <div class="ribbon-end">
          <button aria-label="More commands"><svg viewBox="0 0 10 10"><path d="M1 1l4 4-4 4M5 1l4 4-4 4" fill="none" stroke="#333" stroke-width="1.200"/></svg></button>
          <button aria-label="Collapse ribbon"><svg viewBox="0 0 10 10"><path d="M1 7l4-4 4 4" fill="none" stroke="#333" stroke-width="2"/></svg></button>
        </div>
      </div>
      <div class="side-tools">
        <div class="side-tools-bar">
          <span class="grip"></span>
          <button aria-label="Reference plane"><svg class="icon"><use href="#plane-blue"/></svg></button>
          <button aria-label="Expand"><svg class="more" viewBox="0 0 10 10"><path d="M1 0l4 4 4-4M1 5l4 4 4-4" fill="none" stroke="#333"/></svg></button>
        </div>
      </div>
    </div>

    <!-- WORKSPACE -->
    <div class="workspace">
      <div class="tabs-row">
        <nav class="cmd-tabs">
          <button>Features</button>
          <button>Sketch</button>
          <button>Mesh Modeling</button>
          <button>Markup</button>
          <button class="active">Evaluate</button>
          <button>MBD Dimensions</button>
          <button>SOLIDWORKS Add-Ins</button>
          <button>Simulation</button>
          <button>MBD</button>
          <button>SOLIDWORKS CAM</button>
          <button>SOLIDWORKS CAM TBM</button>
          <button>Analysis Preparation</button>
        </nav>
        <div class="doc-controls">
          <button aria-label="Dock left"><svg class="icon"><use href="#dock-left"/></svg></button>
          <button aria-label="Dock right"><svg class="icon"><use href="#dock-right"/></svg></button>
          <button aria-label="Minimize document"><svg class="icon"><use href="#minimize"/></svg></button>
          <button aria-label="Restore document"><svg class="icon"><use href="#restore"/></svg></button>
          <button aria-label="Close document"><svg class="icon"><use href="#close"/></svg></button>
        </div>
      </div>

      <div class="body-row">
        <aside class="left-tools">
          <span class="grip"></span>
          <button aria-label="Front"><svg class="icon"><use href="#cube-front"/></svg></button>
          <button aria-label="Back"><svg class="icon"><use href="#cube"/></svg></button>
          <button aria-label="Left"><svg class="icon"><use href="#cube"/></svg></button>
          <button aria-label="Right"><svg class="icon"><use href="#cube"/></svg></button>
          <button aria-label="Top"><svg class="icon"><use href="#cube"/></svg></button>
          <button aria-label="Bottom"><svg class="icon"><use href="#cube"/></svg></button>
          <button aria-label="Isometric"><svg class="icon"><use href="#cube-iso"/></svg></button>
          <hr>
          <button aria-label="Edit sketch"><svg class="icon"><use href="#sketch-edit"/></svg></button>
          <button aria-label="Repair sketch"><svg class="icon"><use href="#wrench"/></svg></button>
          <button aria-label="Sketch drawing"><svg class="icon"><use href="#drawing"/></svg></button>
          <hr>
          <button aria-label="Bodies"><svg class="icon"><use href="#stack"/></svg></button>
          <button aria-label="Configurations"><svg class="icon"><use href="#stack-open"/></svg></button>
          <hr class="full">
        </aside>

        <!-- FEATURE TREE -->
        <section class="tree-panel">
          <div class="panel-top"><span class="dot"></span></div>
          <div class="panel-tabs">
            <button class="active" aria-label="Feature tree"><svg class="icon"><use href="#part"/></svg></button>
            <button aria-label="Properties"><svg class="icon"><use href="#property"/></svg></button>
            <button aria-label="Configurations"><svg class="icon"><use href="#config"/></svg></button>
            <button aria-label="Dimensions"><svg class="icon"><use href="#target"/></svg></button>
            <button aria-label="Appearances"><svg class="icon"><use href="#ball-cut"/></svg></button>
            <button class="cut" aria-label="CAM tree"><svg class="icon"><use href="#cam"/></svg></button>
            <button class="scroll" aria-label="Scroll left"><i class="tri left"></i></button>
            <button class="scroll" aria-label="Scroll right"><i class="tri right"></i></button>
          </div>
          <label class="filter">
            <svg class="icon"><use href="#funnel"/></svg>
            <input type="text" aria-label="Filter tree">
          </label>
          <ul class="tree">
            <li class="root"><svg class="icon"><use href="#part"/></svg><svg class="icon wide"><use href="#cap"/></svg>Cavity (Default) &lt;&lt;Default&gt;_Display State 1&gt;</li>
            <li><i class="tri closed"></i><svg class="icon"><use href="#history"/></svg>History</li>
            <li><svg class="icon"><use href="#sensors"/></svg>Sensors</li>
            <li><i class="tri closed"></i><svg class="icon" viewBox="0 0 18 18"><use href="#folder"/><text class="icon-mark serif" x="5" y="15">A</text></svg>Annotations</li>
            <li><i class="tri closed"></i><svg class="icon"><use href="#bodies"/></svg>Solid Bodies(1)</li>
            <li><svg class="icon"><use href="#material"/></svg>Material &lt;not specified&gt;-&gt;?</li>
            <li><svg class="icon"><use href="#plane"/></svg>Front Plane</li>
            <li><svg class="icon"><use href="#plane"/></svg>Top Plane</li>
            <li><svg class="icon"><use href="#plane"/></svg>Right Plane</li>
            <li><svg class="icon"><use href="#origin"/></svg>Origin</li>
            <li><svg class="icon"><use href="#stock"/></svg>Stock-Cake-1-&gt;?</li>
            <li><i class="tri opened"></i><svg class="icon"><use href="#hole"/></svg>CSK for M10 Flat Head Machine Screw1</li>
            <li class="child"><svg class="icon"><use href="#sketch"/></svg>Sketch7</li>
            <li class="child"><svg class="icon"><use href="#sketch"/></svg>Sketch6</li>
          </ul>
          <div class="rollback"></div>
          <div class="hscroll"><span></span></div>
          <button class="splitter" aria-label="Collapse panel"><span class="dot"></span></button>
        </section>

        <!-- VIEWPORT -->
        <main class="viewport">
          <svg class="model" viewBox="305 150 1613 828">
            <defs>
              <linearGradient id="wall" gradientUnits="userSpaceOnUse" x1="738" y1="0" x2="1126" y2="0">
                <stop offset="0" stop-color="#888a9e"/><stop offset=".14" stop-color="#737584"/><stop offset=".25" stop-color="#5e606c"/><stop offset=".35" stop-color="#50525d"/><stop offset=".88" stop-color="#50525d"/><stop offset=".95" stop-color="#5e606b"/><stop offset="1" stop-color="#6b6d7b"/>
              </linearGradient>
              <linearGradient id="fillet" gradientUnits="userSpaceOnUse" x1="738" y1="0" x2="1126" y2="0">
                <stop offset="0" stop-color="#7b7d90"/><stop offset=".14" stop-color="#636572"/><stop offset=".33" stop-color="#50525d"/><stop offset=".88" stop-color="#50525d"/><stop offset="1" stop-color="#5e606c"/>
              </linearGradient>
              <linearGradient id="holeWall" gradientUnits="userSpaceOnUse" x1="887" y1="0" x2="981" y2="0">
                <stop offset="0" stop-color="#808296"/><stop offset=".35" stop-color="#50525d"/><stop offset=".85" stop-color="#50525d"/><stop offset="1" stop-color="#636571"/>
              </linearGradient>
              <radialGradient id="gleam"><stop offset="0" stop-color="#a2a3b8"/><stop offset=".5" stop-color="#a2a3b8" stop-opacity=".4"/><stop offset="1" stop-color="#a2a3b8" stop-opacity="0"/></radialGradient>
              <clipPath id="cavityClip"><ellipse cx="932" cy="444" rx="194" ry="145"/></clipPath>
              <clipPath id="holeClip"><ellipse cx="934" cy="557" rx="47" ry="35"/></clipPath>
            </defs>
            <g stroke="#000" stroke-width="1.200" stroke-linejoin="round">
              <path d="M834 209l413 160-218 309-413-159z" fill="#51535e"/>
              <path d="M616 519l413 159 4 170-414-159z" fill="#51535e"/>
              <path d="M1247 369l3 169-217 310-4-170z" fill="#7e8093"/>
            </g>
            <g clip-path="url(#cavityClip)">
              <ellipse cx="932" cy="444" rx="194" ry="145" fill="url(#wall)"/>
              <ellipse cx="934" cy="528" rx="190" ry="142" fill="url(#fillet)"/>
              <ellipse cx="764" cy="494" rx="15" ry="48" fill="url(#gleam)" transform="rotate(30 764 494)"/>
              <ellipse cx="934" cy="528" rx="190" ry="142" fill="none" stroke="#000" stroke-width="1.200"/>
              <ellipse cx="934" cy="555" rx="149" ry="110" fill="#51535e" stroke="#000" stroke-width="1.200"/>
              <g clip-path="url(#holeClip)">
                <ellipse cx="934" cy="557" rx="47" ry="35" fill="url(#holeWall)"/>
                <ellipse cx="934" cy="586" rx="45" ry="33" fill="#e1e4ed" stroke="#000"/>
              </g>
              <ellipse cx="934" cy="557" rx="47" ry="35" fill="none" stroke="#000" stroke-width="1.200"/>
            </g>
            <ellipse cx="932" cy="444" rx="194" ry="145" fill="none" stroke="#000" stroke-width="1.200"/>
          </svg>

          <div class="view-tools">
            <button aria-label="Zoom to fit"><svg class="icon"><use href="#zoom-fit"/></svg></button>
            <button aria-label="Zoom to area"><svg class="icon"><use href="#zoom-area"/></svg></button>
            <button aria-label="Previous view"><svg class="icon"><use href="#prev-view"/></svg></button>
            <button aria-label="Section view"><svg class="icon"><use href="#section-view"/></svg></button>
            <button aria-label="Dynamic annotation"><svg class="icon"><use href="#dynamic"/></svg></button>
            <button class="split" aria-label="View orientation"><svg class="icon"><use href="#orient"/></svg><i class="caret"></i></button>
            <button class="split" aria-label="Display style"><svg class="icon"><use href="#display"/></svg><i class="caret"></i></button>
            <button class="split" aria-label="Hide or show"><svg class="icon"><use href="#eye"/></svg><i class="caret"></i></button>
            <button aria-label="Edit appearance"><svg class="icon"><use href="#appearance"/></svg></button>
            <button class="split" aria-label="Apply scene"><svg class="icon"><use href="#scene"/></svg><i class="caret"></i></button>
            <button class="split" aria-label="View settings"><svg class="icon"><use href="#monitor"/></svg><i class="caret"></i></button>
          </div>

          <svg class="triad" viewBox="0 0 60 60">
            <path d="M12 41L24 22" stroke="#9af09a" stroke-width="3"/><path d="M20 24l5-4 3 3-1 6-5 1z" fill="#0a5a0a"/>
            <path d="M12 42l26 10" stroke="#a00000" stroke-width="4"/><path d="M33 46l13 9-14 1z" fill="#c01010"/>
            <path d="M12 42V24" stroke="#000090" stroke-width="4"/><path d="M7 26l5-9 5 9z" fill="#0000b0"/><circle cx="13" cy="23" r="2" fill="#aab0ff"/><circle cx="13" cy="40" r="2" fill="#8088e0"/>
            <text x="9" y="12" fill="#3434d8" font-weight="bold">Z</text>
            <text x="31" y="12" fill="#46a046">Y</text>
            <text x="49" y="56" fill="#e03838">X</text>
          </svg>

          <div class="task-pane">
            <button aria-label="Resources"><svg class="icon"><use href="#home"/></svg></button>
            <button aria-label="Design library"><svg class="icon"><use href="#books"/></svg></button>
            <button aria-label="File explorer"><svg class="icon"><use href="#explorer"/></svg></button>
            <button aria-label="View palette"><svg class="icon"><use href="#palette"/></svg></button>
            <button aria-label="Appearances"><svg class="icon"><use href="#ball"/></svg></button>
            <button aria-label="Custom properties"><svg class="icon"><use href="#property"/></svg></button>
            <button class="active" aria-label="3DEXPERIENCE"><svg class="icon"><use href="#globe"/></svg></button>
          </div>
        </main>
      </div>
    </div>

    <!-- BOTTOM TABS -->
    <div class="bottom-row">
      <div class="page-nav">
        <button aria-label="First"><svg viewBox="0 0 12 12"><path d="M2 1h2v10H2zM11 1v10L5 6z"/></svg></button>
        <button aria-label="Previous"><svg viewBox="0 0 12 12"><path d="M9 1v10L3 6z"/></svg></button>
        <button aria-label="Next"><svg viewBox="0 0 12 12"><path d="M3 1v10l6-5z"/></svg></button>
        <button aria-label="Last"><svg viewBox="0 0 12 12"><path d="M8 1h2v10H8zM1 1v10l6-5z"/></svg></button>
      </div>
      <nav class="sheet-tabs">
        <button class="active">Model</button>
        <button>3D Views</button>
        <button class="motion">Motion Study 1</button>
      </nav>
    </div>

    <footer class="status">
      <span class="edition">SOLIDWORKS Student Edition - Academic Use Only</span>
      <span class="mode">Editing Part</span>
      <span class="units">MMGS</span>
      <i class="tri up"></i>
      <svg class="icon"><use href="#tag"/></svg>
    </footer>
  </div>

</body>
</html>
```
FILE: styles.css
```css
* {
  box-sizing: border-box;
}

body {
  margin: 0;
  font-family: "Open Sans", "Noto Sans", sans-serif;
  font-size: 13px;
  color: #111;
  background: #f7f7f7;
}

button {
  font: inherit;
  color: inherit;
  background: none;
  border: none;
  padding: 0;
  display: flex;
  align-items: center;
  white-space: nowrap;
}

button:disabled {
  color: #b8b8b8;
}

a {
  color: inherit;
  text-decoration: none;
}

input {
  font: inherit;
  border: none;
  background: none;
  outline: none;
  padding: 0;
  min-width: 0;
}

.sprite {
  position: absolute;
  width: 0;
  height: 0;
}

.icon {
  width: 18px;
  height: 18px;
  flex: none;
}

.icon.wide {
  width: 21px;
}

.icon-mark {
  font-size: 10px;
  font-weight: bold;
  fill: #1d6f9c;
}

.icon-mark.serif {
  font-family: "Liberation Serif", serif;
  font-size: 12px;
}

.caret {
  flex: none;
  border: 3px solid transparent;
  border-top: 4px solid #444;
  border-bottom: 0;
}

.app {
  height: 100vh;
  display: flex;
  flex-direction: column;
  overflow: hidden;
}

/* --- TITLE BAR --- */
.titlebar {
  height: 40px;
  flex: none;
  display: flex;
  align-items: center;
  border-top: 1px solid #b8b8b8;
  border-bottom: 1px solid #b8b8b8;
}

.brand {
  display: flex;
  align-items: center;
  gap: 5px;
  width: 146px;
  padding-left: 5px;
  color: #c8322b;
}

.brand-mark {
  width: 20px;
  height: 20px;
}

.brand-name {
  font-family: Lato, sans-serif;
  font-style: italic;
  font-size: 13px;
}

.menu {
  display: flex;
  gap: 16px;
  padding-bottom: 2px;
  padding-top: 5px;
}

.pin {
  margin-left: 13px;
  padding-right: 4px;
}

.quickbar {
  display: flex;
  align-items: center;
  align-self: stretch;
  border-left: 1px solid #b8b8b8;
  padding-left: 25px;
}

.quickbar button {
  margin-right: 15px;
}

.quickbar .split {
  margin-right: 0;
  padding-right: 12px;
  gap: 11px;
}

.quickbar .last {
  padding-right: 5px;
  opacity: 0.8;
}

.quickbar .select-tool {
  margin: 0;
  width: 32px;
  height: 32px;
  justify-content: center;
  background: #b0b0b0;
  border: 1px solid #808080;
}

.quickbar .select-more {
  margin-right: 8px;
  width: 14px;
  height: 32px;
  justify-content: center;
  border: 1px solid #808080;
  border-left: 0;
}

.doc-title {
  flex: 1;
  padding-right: 8px;
  text-align: center;
}

.search {
  display: flex;
  align-items: center;
  width: 252px;
  height: 29px;
  padding: 0 6px 0 7px;
  background: #fff;
  border: 1px solid #b0b0b0;
}

.search input {
  flex: 1;
  margin-left: 8px;
}

.search input::placeholder {
  color: #6a6a6a;
}

.search .caret {
  margin-left: 8px;
  border-width: 5px 4px 0;
  border-top-color: #808080;
}

.window-controls {
  display: flex;
  gap: 23px;
  padding: 0 14px 0 15px;
  color: #333;
}

/* --- RIBBON --- */
.ribbon-row {
  height: 82px;
  flex: none;
  display: flex;
}

.ribbon {
  flex: 1;
  display: flex;
  border-right: 1px solid #808080;
  border-bottom: 1px solid #808080;
}

.group {
  display: flex;
  margin: 1px 0 2px;
  border-right: 1px solid #c4c4c4;
}

.group:nth-child(4) {
  border: 0;
  padding-left: 3px;
}

.big {
  flex-direction: column;
  padding-top: 6px;
  line-height: 19px;
}

.big span {
  margin-top: 2px;
  white-space: normal;
}

.study {
  width: 98px;
  padding-left: 4px;
}

.study .caret {
  margin-top: 20px;
}

.interference {
  width: 84px;
}

.mass {
  width: 72px;
}

.draft {
  width: 62px;
}

.cmds {
  display: grid;
  grid-template-rows: repeat(3, 26px);
  padding-left: 2px;
}

.cmds button {
  gap: 8px;
}

.c1 {
  width: 92px;
}

.c2 {
  width: 184px;
}

.c3 {
  width: 153px;
}

.c4 {
  width: 140px;
}

.c5 {
  width: 165px;
}

.c6 {
  width: 39px;
}

.c7 {
  width: 266px;
}

.c8 {
  width: 207px;
}

.ribbon-end {
  margin-left: auto;
  padding: 21px 7px 8px 0;
  display: flex;
  flex-direction: column;
  justify-content: space-between;
}

.ribbon-end svg,
.more {
  width: 10px;
  height: 10px;
}

.side-tools {
  width: 61px;
}

.side-tools-bar {
  display: flex;
  align-items: center;
  gap: 10px;
  height: 33px;
  padding-left: 2px;
  border-top: 1px solid #b8b8b8;
  border-bottom: 1px solid #808080;
}

.side-tools .grip {
  height: 27px;
  border-left: 3px dotted #999;
}

/* --- WORKSPACE --- */
.workspace {
  flex: 1;
  min-height: 0;
  display: flex;
  flex-direction: column;
  background:
    radial-gradient(ellipse 30% 30% at 100% 88%, #eff0f5, transparent),
    linear-gradient(to bottom, transparent 56%, #fdfdfe 70%, #fefefe 88%, #f5f6f9 100%),
    radial-gradient(ellipse 60% 52% at 16% 6%, #fff 60%, transparent 100%),
    radial-gradient(ellipse 28% 70% at 82% 43%, #d6dae7, #e1e5ee 55%, #ebedf3 100%);
}

.tabs-row {
  display: flex;
  justify-content: space-between;
  height: 28px;
  flex: none;
}

.cmd-tabs {
  display: grid;
  grid-template-columns: 74px 62px 124px 70px 82px 136px 173px 91px 56px 157px 188px 159px;
}

.cmd-tabs button {
  justify-content: center;
  padding-bottom: 1px;
  font-size: 14px;
  color: #333;
  background: #d4d4d4;
  border-right: 1px solid #808080;
  border-bottom: 1px solid #808080;
}

.cmd-tabs .active {
  font-weight: bold;
  background: #f7f7f7;
  border-bottom-color: #f7f7f7;
}

.doc-controls {
  display: flex;
  gap: 8px;
  padding-right: 9px;
  color: #a6a6a6;
}

.body-row {
  flex: 1;
  min-height: 0;
  display: flex;
}

.left-tools {
  width: 33px;
  padding-top: 2px;
  background: #f7f7f7;
  border-right: 1px solid #b8b8b8;
}

.left-tools .grip {
  display: block;
  margin: 0 2px 8px 3px;
  border-top: 3px dotted #aaa;
}

.left-tools button {
  height: 26px;
  padding-left: 7px;
}

.left-tools hr {
  margin: 3px 2px 5px 5px;
  border: 0;
  border-top: 1px solid #909090;
}

.left-tools .full {
  margin: 6px 2px 0 0;
}

/* --- FEATURE TREE --- */
.tree-panel {
  position: relative;
  width: 272px;
  display: flex;
  flex-direction: column;
  background: #f7f7f7;
  border-right: 1px solid #909090;
}

.panel-top {
  height: 29px;
  padding: 11px 0 0 131px;
  border-bottom: 1px solid #808080;
  background: linear-gradient(#c4c4c4, #c4c4c4) 0 4px / 100% 1px no-repeat,
    linear-gradient(#c4c4c4, #c4c4c4) 0 24px / 100% 1px no-repeat;
}

.dot {
  display: block;
  width: 6px;
  height: 6px;
  border: 1px solid #808080;
  border-radius: 50%;
  background: #d0d0d0;
}

.panel-tabs {
  display: flex;
  height: 26px;
  padding: 0 2px 0 1px;
}

.panel-tabs button {
  width: 40px;
  justify-content: center;
  background: #d4d4d4;
  border-right: 1px solid #808080;
  border-bottom: 1px solid #808080;
}

.panel-tabs .active {
  background: #f7f7f7;
  border-bottom-color: #f7f7f7;
}

.panel-tabs .cut {
  flex: 1;
  justify-content: flex-start;
  padding-left: 10px;
  overflow: hidden;
  border-right: 0;
}

.panel-tabs .scroll {
  flex: none;
  width: 22px;
  background: #fff;
  border: 1px solid #c4c4c4;
}

.tri {
  width: 0;
  height: 0;
  border: 4px solid transparent;
}

.tri.left {
  border-right-color: #111;
  border-left: 0;
}

.tri.right {
  border-left-color: #111;
  border-right: 0;
}

.tri.up {
  border-bottom-color: #333;
  border-top: 0;
}

.filter {
  display: flex;
  align-items: center;
  height: 31px;
  margin: 1px 5px 0 4px;
  padding-left: 2px;
  border: 1px solid #c4c4c4;
}

.filter input {
  flex: 1;
}

.tree {
  list-style: none;
  margin: 0 2px 0 0;
  padding: 0;
  overflow: hidden;
  font-size: 15px;
}

.tree li {
  position: relative;
  display: flex;
  align-items: center;
  gap: 5px;
  height: 24px;
  padding-left: 26px;
  white-space: nowrap;
}

.tree .root {
  padding-left: 4px;
  gap: 3px;
}

.tree .child {
  padding-left: 49px;
}

.tree .tri {
  position: absolute;
  left: 9px;
  top: 7px;
}

.tree .closed {
  border-left-color: #555;
  border-right: 0;
}

.tree .opened {
  left: 7px;
  top: 10px;
  border-top-color: #555;
  border-bottom: 0;
}

.rollback {
  height: 4px;
  margin-right: 2px;
  flex: none;
  background: #3f87b5;
}

.hscroll {
  margin: auto 2px 4px 0;
  height: 20px;
  padding: 8px 74px 0 21px;
  background: #f0f0f0;
  border-bottom: 1px solid #c4c4c4;
}

.hscroll span {
  display: block;
  height: 3px;
  border-radius: 2px;
  background: #808080;
}

.splitter {
  position: absolute;
  z-index: 1;
  right: -12px;
  top: 375px;
  width: 12px;
  height: 49px;
  padding-left: 2px;
  background: #f7f7f7;
  border: 1px solid #909090;
  border-left: 0;
}

/* --- VIEWPORT --- */
.viewport {
  flex: 1;
  position: relative;
  overflow: hidden;
}

.model {
  display: block;
  width: 100%;
  height: 100%;
}

.view-tools {
  position: absolute;
  top: 6px;
  left: 0;
  right: 0;
  display: flex;
  justify-content: center;
  gap: 8px;
  opacity: 0.75;
}

.view-tools .split {
  gap: 7px;
  padding-right: 1px;
}

.triad {
  position: absolute;
  left: 38px;
  bottom: 49px;
  width: 60px;
  height: 60px;
  font-size: 10px;
}

.task-pane {
  position: absolute;
  right: 0;
  top: 29px;
  width: 31px;
  border: 1px solid #808080;
  border-right: 0;
}

.task-pane button {
  width: 100%;
  height: 30px;
  justify-content: center;
  background: #d4d4d4;
  border-bottom: 1px solid #808080;
}

.task-pane .active {
  background: #fff;
  border-bottom: 0;
}

/* --- BOTTOM BARS --- */
.bottom-row {
  height: 20px;
  flex: none;
  display: flex;
  padding-left: 34px;
  border-top: 1px solid #808080;
}

.page-nav {
  display: flex;
  width: 80px;
  background: #a4a5bb;
}

.page-nav button {
  flex: 1;
  justify-content: center;
  border: 1px solid #85879c;
}

.page-nav svg {
  width: 12px;
  height: 12px;
  fill: #7f8196;
}

.sheet-tabs {
  display: flex;
}

.sheet-tabs button {
  padding: 0 13px 1px;
  font-size: 15px;
  line-height: 18px;
  background: #d4d4d4;
  border-right: 1px solid #808080;
}

.sheet-tabs .active {
  padding: 0 14px 1px 16px;
  font-weight: bold;
  background: #fff;
}

.sheet-tabs .motion {
  padding: 0 24px 1px 13px;
}

.status {
  height: 18px;
  flex: none;
  display: flex;
  align-items: flex-start;
  padding-left: 1px;
  border-top: 1px solid #808080;
  overflow: hidden;
  font-size: 14px;
  line-height: 25px;
}

.status .mode {
  margin-left: auto;
  width: 202px;
}

.status .units {
  width: 68px;
}

.status .tri {
  margin: 10px 25px 0 0;
}

.status .icon {
  margin-top: 3px;
}
```
